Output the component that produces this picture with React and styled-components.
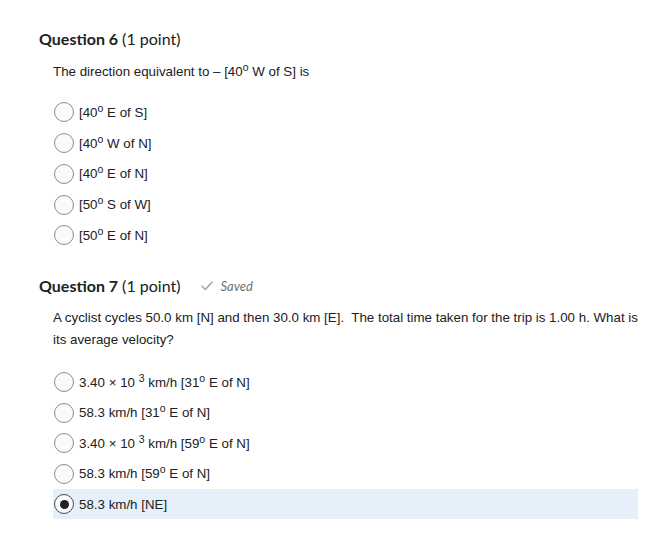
import styled, { createGlobalStyle } from "styled-components";

const GlobalStyle = createGlobalStyle`
  body {
    margin: 0;
    background: #ffffff;
    font-family: "Liberation Sans", Arial, sans-serif;
    color: #202122;
  }
`;

const Page = styled.div`
  padding: 29px 33px 0 39px;
  width: 671px;
  box-sizing: border-box;
`;

const Section = styled.section`
  margin-bottom: 25px;
`;

const Heading = styled.div`
  display: flex;
  align-items: center;
  font-family: Lato, "Liberation Sans", sans-serif;
  font-size: 16px;
  line-height: 20px;
  color: #202122;

  & > b {
    font-weight: 700;
  }
`;

const Points = styled.span`
  margin-left: 4px;
`;

const Saved = styled.span`
  display: inline-flex;
  align-items: center;
  gap: 7px;
  margin-left: 21px;
  font-size: 13px;
  font-style: italic;
  color: #6f7377;

  svg {
    color: #a7a9ab;
  }
`;

const Body = styled.div`
  padding-left: 14px;
`;

const Prompt = styled.p`
  margin: ${(p) => p.$top}px 0 ${(p) => p.$bottom}px;
  font-size: 13.33px;
  line-height: 22px;
  color: #202122;
`;

const Options = styled.div`
  display: flex;
  flex-direction: column;
`;

const Option = styled.label`
  display: flex;
  align-items: center;
  height: ${(p) => p.$h}px;
  padding-left: 1px;
  background: ${(p) => (p.$selected ? "#e6f0fa" : "transparent")};
  font-size: 13.33px;
  color: #202122;
`;

const Radio = styled.span`
  width: 20px;
  height: 20px;
  box-sizing: border-box;
  border-radius: 50%;
  border: 1px solid ${(p) => (p.$checked ? "#494c4e" : "#8a8d90")};
  background: #f9fafb;
  margin-right: 5px;
  display: flex;
  align-items: center;
  justify-content: center;

  &::after {
    content: "";
    width: 9px;
    height: 9px;
    border-radius: 50%;
    background: ${(p) => (p.$checked ? "#202122" : "transparent")};
  }
`;

const Sup = styled.sup`
  font-size: 10.5px;
  line-height: 0;
  vertical-align: 5px;
`;

const deg = <Sup>o</Sup>;

function Question({ number, prompt, options, saved, promptTop, promptBottom, rowHeight }) {
  return (
    <Section>
      <Heading>
        <b>Question {number}</b>
        <Points>(1 point)</Points>
        {saved && (
          <Saved>
            <svg width="12" height="10" viewBox="0 0 12 10" fill="none">
              <path
                d="M1 5.2 L4.3 8.4 L11 1.4"
                stroke="currentColor"
                strokeWidth="1.6"
                strokeLinecap="round"
                strokeLinejoin="round"
              />
            </svg>
            Saved
          </Saved>
        )}
      </Heading>
      <Body>
        <Prompt $top={promptTop} $bottom={promptBottom}>
          {prompt}
        </Prompt>
        <Options>
          {options.map((opt, i) => (
            <Option key={i} $h={rowHeight} $selected={opt.checked}>
              <Radio $checked={opt.checked} />
              <span>{opt.label}</span>
            </Option>
          ))}
        </Options>
      </Body>
    </Section>
  );
}

const q6Options = [
  { label: <>[40{deg} E of S]</> },
  { label: <>[40{deg} W of N]</> },
  { label: <>[40{deg} E of N]</> },
  { label: <>[50{deg} S of W]</> },
  { label: <>[50{deg} E of N]</> },
];

const q7Options = [
  { label: <>3.40 × 10 <Sup>3</Sup> km/h [31{deg} E of N]</> },
  { label: <>58.3 km/h [31{deg} E of N]</> },
  { label: <>3.40 × 10 <Sup>3</Sup> km/h [59{deg} E of N]</> },
  { label: <>58.3 km/h [59{deg} E of N]</> },
  { label: <>58.3 km/h [NE]</>, checked: true },
];

export default function App() {
  return (
    <>
      <GlobalStyle />
      <Page>
        <Question
          number={6}
          prompt={<>The direction equivalent to – [40{deg} W of S] is</>}
          options={q6Options}
          promptTop={12}
          promptBottom={14}
          rowHeight={30.75}
        />
        <Question
          number={7}
          saved
          prompt={
            <>
              A cyclist cycles 50.0 km [N] and then 30.0 km [E].&nbsp; The total
              time taken for the trip is 1.00 h. What is its average velocity?
            </>
          }
          options={q7Options}
          promptTop={11}
          promptBottom={16}
          rowHeight={30.5}
        />
      </Page>
    </>
  );
}
